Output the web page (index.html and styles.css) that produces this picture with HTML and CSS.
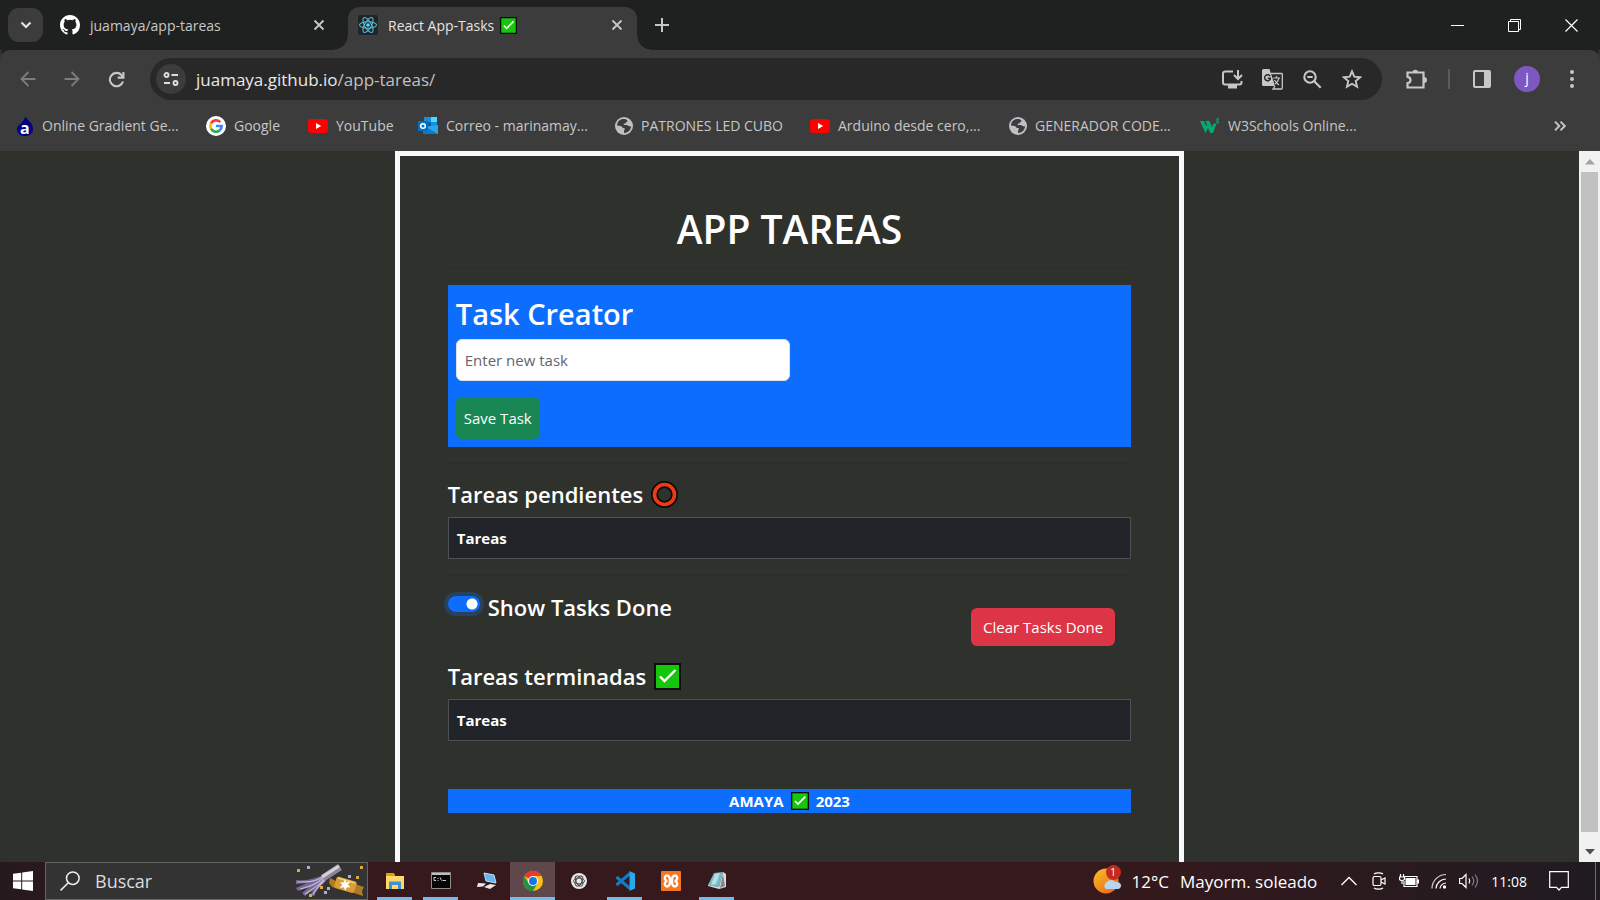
FILE: index.html
```html
<!DOCTYPE html>
<html lang="es">
<head>
<meta charset="utf-8">
<meta name="viewport" content="width=device-width, initial-scale=1">
<title>React App-Tasks</title>
<link rel="stylesheet" href="styles.css">
</head>
<body>
<svg class="defs" aria-hidden="true">
  <symbol id="check" viewBox="0 0 27 27"><path fill="#0b0f0a" d="M0 0h27v27H0z"/><path fill="#16c60c" d="M2 2h23v23H2z"/><path fill="none" stroke="#fff" stroke-width="2.400" d="M6 13.500l4.500 4.500L21.500 7"/></symbol>
  <symbol id="x" viewBox="0 0 12 12"><path fill="none" stroke="currentColor" stroke-width="1.800" d="M1.500 1.500l9 9m0-9l-9 9"/></symbol>
  <symbol id="yt" viewBox="0 0 20 20"><rect y="3" width="20" height="14" rx="3.500" fill="#f00"/><path fill="#fff" d="M8 7l5.200 3L8 13z"/></symbol>
  <symbol id="globe" viewBox="0 0 18 18"><circle cx="9" cy="9" r="9" fill="#bdc1c6"/><path fill="#3c3c3c" d="M8 2C4 2.500 2 5.500 2 8.500l3.500.500c1.500 0 1.500 2 3 2 1.500 0 2 1 .5 2.500V16c4-.2 7-3 7-7-1 1-2.500 0-3-.5-1-.5-2-.5-3.500-.5-1 0-1.500-1.500 0-1.500h1c.5-2 2-1 2-3C11 2 9.500 1.800 8 2z"/></symbol>
</svg>

<header class="tabs">
  <button class="tab-search" aria-label="Buscar pestañas"><svg width="12" height="8" viewBox="0 0 12 8"><path fill="none" stroke="#e3e3e3" stroke-width="2.200" d="M1.500 1.500L6 6l4.500-4.500"/></svg></button>
  <div class="tab">
    <svg width="20" height="20" viewBox="0 0 16 16"><path fill="#fff" d="M8 0C3.580 0 0 3.580 0 8c0 3.540 2.290 6.530 5.470 7.590.4.070.55-.17.55-.38 0-.19-.01-.82-.01-1.490-2.010.37-2.530-.49-2.690-.94-.09-.23-.48-.94-.82-1.130-.28-.15-.68-.52-.01-.53.63-.01 1.080.58 1.230.82.72 1.210 1.870.87 2.330.66.07-.52.28-.87.51-1.070-1.780-.2-3.640-.89-3.640-3.950 0-.87.31-1.590.82-2.150-.08-.2-.36-1.020.08-2.120 0 0 .67-.21 2.200.82a7.600 7.600 0 0 1 4 0c1.530-1.040 2.200-.82 2.200-.82.44 1.100.16 1.920.08 2.120.51.56.82 1.270.82 2.150 0 3.070-1.870 3.750-3.650 3.950.29.25.54.73.54 1.480 0 1.070-.01 1.930-.01 2.200 0 .21.15.46.55.38A8 8 0 0 0 16 8c0-4.420-3.580-8-8-8z"/></svg>
    <span class="tab-title">juamaya/app-tareas</span>
    <button class="icon-btn" aria-label="Cerrar"><svg width="12" height="12"><use href="#x"/></svg></button>
  </div>
  <div class="tab tab-active">
    <svg width="20" height="20" viewBox="0 0 20 20"><rect width="20" height="20" rx="2" fill="#222527"/><g fill="none" stroke="#55bcd6" stroke-width="1.100"><ellipse cx="10" cy="10" rx="8.500" ry="3.300"/><ellipse cx="10" cy="10" rx="8.500" ry="3.300" transform="rotate(60 10 10)"/><ellipse cx="10" cy="10" rx="8.500" ry="3.300" transform="rotate(120 10 10)"/></g><circle cx="10" cy="10" r="1.700" fill="#61dafb"/></svg>
    <span class="tab-title">React App-Tasks <svg class="tab-check" role="img" aria-label="hecho"><use href="#check"/></svg></span>
    <button class="icon-btn" aria-label="Cerrar"><svg width="12" height="12"><use href="#x"/></svg></button>
  </div>
  <button class="icon-btn new-tab" aria-label="Nueva pestaña"><svg width="14" height="14" viewBox="0 0 14 14"><path stroke="currentColor" stroke-width="2" d="M7 0v14M0 7h14"/></svg></button>
  <div class="win-buttons">
    <button aria-label="Minimizar"><svg width="13" height="13"><path stroke="#fff" d="M0 6.500h13"/></svg></button>
    <button aria-label="Restaurar"><svg width="13" height="13"><path fill="none" stroke="#fff" d="M.5 2.500h10v10H.5zM2.500 2.500v-2h10v10h-2"/></svg></button>
    <button aria-label="Cerrar ventana"><svg width="13" height="13"><path stroke="#fff" stroke-width="1.200" d="M.5.500l12 12m0-12l-12 12"/></svg></button>
  </div>
</header>

<nav class="toolbar">
  <div class="nav-buttons">
    <button class="icon-btn dim" aria-label="Atrás"><svg width="16" height="16" viewBox="0 0 16 16"><path fill="none" stroke="currentColor" stroke-width="1.800" d="M15.500 8H2m6.500-7L1.500 8l7 7"/></svg></button>
    <button class="icon-btn dim" aria-label="Adelante"><svg width="16" height="16" viewBox="0 0 16 16"><path fill="none" stroke="currentColor" stroke-width="1.800" d="M.5 8H14M7.500 1l7 7-7 7"/></svg></button>
    <button class="icon-btn" aria-label="Recargar"><svg width="17" height="17" viewBox="0 0 17 17"><path fill="none" stroke="currentColor" stroke-width="2.100" d="M15 10.500A6.700 6.700 0 1 1 13.500 4l1.500 1.800"/><path fill="none" stroke="currentColor" stroke-width="2.100" d="M15.400 1v5.600H9.700"/></svg></button>
  </div>
  <div class="omnibox">
    <button class="site-info" aria-label="Información del sitio"><svg width="16" height="14" viewBox="0 0 16 14"><g fill="none" stroke="#dedede" stroke-width="1.900"><circle cx="3.500" cy="3" r="2"/><path d="M8.500 3H15M1 11h6"/><circle cx="12.500" cy="11" r="2"/></g></svg></button>
    <div class="url">juamaya.github.io<span>/app-tareas/</span></div>
    <button class="icon-btn" aria-label="Instalar"><svg width="21" height="19" viewBox="0 0 21 19"><path fill="none" stroke="currentColor" stroke-width="2" d="M11 1.500H3.500C2 1.500 1 2 1 3.500v9c0 1 .8 2 2 2h14.500c1.200 0 2-1 2-2V11"/><path fill="currentColor" d="M6 15h9v3.500H6z"/><path fill="none" stroke="currentColor" stroke-width="2" d="M16 0v9m-4-4l4 4 4-4"/></svg></button>
    <button class="icon-btn" aria-label="Traducir"><svg width="21" height="21" viewBox="0 0 21 21"><path fill="currentColor" d="M1.500 0h6L13 17H1.500A1.500 1.500 0 0 1 0 15.500v-14A1.500 1.500 0 0 1 1.500 0z"/><path fill="none" stroke="currentColor" stroke-width="1.300" d="M9 4.500h10.500c.5 0 .8.300.8.800V19c0 .6-.3 1-.8 1H11l2-3"/><path fill="none" stroke="#282828" stroke-width="1.400" d="M8.200 7.200A3 3 0 1 0 8.300 10.200V9.300H5.700"/><path fill="none" stroke="currentColor" stroke-width="1.200" d="M11 9h7m-3.500-2v2m2.500 0c-.7 3-2.500 5-4 6m-.5-4c1 2 2.500 3.700 4.500 5"/></svg></button>
    <button class="icon-btn" aria-label="Zoom"><svg width="19" height="19" viewBox="0 0 19 19"><g fill="none" stroke="currentColor" stroke-width="2.100"><circle cx="7" cy="7" r="5.700"/><path d="M11.200 11.200l6.500 6.500M4.300 7h5.400"/></g></svg></button>
    <button class="icon-btn" aria-label="Favorito"><svg width="20" height="20" viewBox="0 0 20 20"><path fill="none" stroke="currentColor" stroke-width="1.900" d="M10 2.300l2.300 5.400 5.900.5-4.500 3.900 1.400 5.700-5.100-3-5.100 3 1.400-5.700-4.500-3.900 5.900-.5z"/></svg></button>
  </div>
  <div class="tools">
    <button class="icon-btn" aria-label="Extensiones"><svg width="21" height="21" viewBox="0 0 21 21"><path fill="none" stroke="currentColor" stroke-width="2.200" d="M2 3.500h15.500v15H1.500v-4.300c4-.5 4-5.900 0-6.400V3.500z"/><path fill="currentColor" d="M6.500 3.500a2.800 2.800 0 0 1 5.600 0zM18 8a3 3 0 0 1 0 6z"/></svg></button>
    <span class="divider"></span>
    <button class="icon-btn" aria-label="Panel lateral"><svg width="18" height="18" viewBox="0 0 18 18"><rect x="1" y="1" width="16" height="16" rx="1" fill="none" stroke="currentColor" stroke-width="2"/><path fill="currentColor" d="M11 1h6v16h-6z"/></svg></button>
    <button class="avatar" aria-label="Perfil">j</button>
    <button class="icon-btn" aria-label="Menú"><svg width="4" height="18"><g fill="currentColor"><circle cx="2" cy="2" r="2"/><circle cx="2" cy="9" r="2"/><circle cx="2" cy="16" r="2"/></g></svg></button>
  </div>
</nav>

<nav class="bookmarks">
  <div class="bookmark-list">
    <a href="#"><svg class="flame" width="18" height="20" viewBox="0 0 18 20"><path fill="#000080" d="M9.500 0C10 4 17 6 17 13c0 4-3 7-8 7s-8-3-8-7C1 9 8 7 9.500 0z"/><text x="4" y="18" class="fav-letter">a</text></svg>Online Gradient Ge...</a>
    <a href="#"><svg width="20" height="20" viewBox="0 0 20 20"><circle cx="10" cy="10" r="10" fill="#fff"/><g fill="none" stroke-width="2.700"><path stroke="#ea4335" d="M14.200 6.200A5.700 5.700 0 0 0 5 7.300"/><path stroke="#fbbc05" d="M5 7.300a5.700 5.700 0 0 0 0 5.400"/><path stroke="#34a853" d="M5 12.700a5.700 5.700 0 0 0 8.700 1.700"/><path stroke="#4285f4" d="M13.700 14.400A5.700 5.700 0 0 0 15.600 10H10"/></g></svg>Google</a>
    <a href="#"><svg width="20" height="20"><use href="#yt"/></svg>YouTube</a>
    <a href="#"><svg width="20" height="20" viewBox="0 0 20 20"><path fill="#1490df" d="M6 1h13v9H6z"/><path fill="#50d9ff" d="M13 1h6v5h-6z"/><path fill="#0a5ea8" d="M6 6h7v5H6z"/><path fill="#28a8ea" d="M5 11l15-2v9H5z"/><path fill="#0f78c8" d="M5 9l8 5 7 4H5z"/><rect y="5" width="10" height="10" fill="#0072c6"/><circle cx="5" cy="10" r="2.300" fill="none" stroke="#fff" stroke-width="1.500"/></svg>Correo - marinamay...</a>
    <a href="#"><svg width="18" height="18"><use href="#globe"/></svg>PATRONES LED CUBO</a>
    <a href="#"><svg width="20" height="20"><use href="#yt"/></svg>Arduino desde cero,...</a>
    <a href="#"><svg width="18" height="18"><use href="#globe"/></svg>GENERADOR CODE...</a>
    <a href="#"><svg width="20" height="16" viewBox="0 0 20 16"><path fill="#04aa6d" d="M0 3h4l2 5 1-1-1.500-4h4l2.500 6 1.500-3.500h3L13 15h-2.500l-2.500-5-2.500 5z"/><path fill="none" stroke="#04aa6d" stroke-width="1.100" d="M16 1h2.500L17 3c2.500 0 2 2.500-1 2"/></svg>W3Schools Online...</a>
  </div>
  <button class="icon-btn" aria-label="Más marcadores"><svg width="12" height="10" viewBox="0 0 12 10"><path fill="none" stroke="currentColor" stroke-width="1.900" d="M1 .7L5.300 5 1 9.300M6.500.7L10.800 5 6.500 9.300"/></svg></button>
</nav>

<div class="viewport">
  <main class="page">
    <div class="frame">
      <h1>APP TAREAS</h1>
      <hr>
      <form class="creator">
        <h2><label for="task">Task Creator</label></h2>
        <input id="task" class="task-input" type="text" placeholder="Enter new task">
        <button class="btn-save" type="button">Save Task</button>
      </form>
      <hr>
      <h4>Tareas pendientes <svg class="emoji" role="img" aria-label="círculo rojo" viewBox="0 0 27 27"><circle cx="13.500" cy="13.500" r="10" fill="none" stroke="#0b0b0a" stroke-width="7"/><circle cx="13.500" cy="13.500" r="10" fill="none" stroke="#f03a17" stroke-width="3.600"/></svg></h4>
      <table><thead><tr><th scope="col">Tareas</th></tr></thead></table>
      <hr>
      <div class="filter">
        <div class="switch"><input id="show" type="checkbox" role="switch" checked><label for="show">Show Tasks Done</label></div>
        <button class="btn-clear" type="button">Clear Tasks Done</button>
      </div>
      <h4>Tareas terminadas <svg class="emoji" role="img" aria-label="hecho"><use href="#check"/></svg></h4>
      <table><thead><tr><th scope="col">Tareas</th></tr></thead></table>
      <footer>AMAYA <svg class="emoji-small" role="img" aria-label="hecho"><use href="#check"/></svg> 2023</footer>
    </div>
  </main>
  <div class="scrollbar">
    <button aria-label="Subir"><svg width="10" height="6"><path fill="#a3a3a3" d="M0 5.500L5 0l5 5.500z"/></svg></button>
    <div class="thumb"></div>
    <button aria-label="Bajar"><svg width="10" height="6"><path fill="#505050" d="M0 0h10L5 5.500z"/></svg></button>
  </div>
</div>

<div class="taskbar">
  <button class="start" aria-label="Inicio"><svg width="20" height="20" viewBox="0 0 20 20"><path fill="#fff" d="M0 2.800L8.200 1.700v7.800H0zM9.200 1.500L20 0v9.500H9.200zM0 10.500h8.200v7.800L0 17.200zM9.200 10.500H20V20L9.200 18.500z"/></svg></button>
  <label class="search">
    <svg width="20" height="20" viewBox="0 0 20 20"><g fill="none" stroke="#f0f0f0" stroke-width="1.500"><circle cx="12.800" cy="7.200" r="6.300"/><path d="M8.300 11.700L.6 19.400"/></g></svg>
    <input type="text" placeholder="Buscar" aria-label="Buscar">
    <svg width="68" height="34" viewBox="0 0 68 34"><path fill="#75678f" d="M25 12l5 5c-5 5-9 8-12 15l-4-1 3-5-8 6-3-3 7-6-11 4-2-3 11-5-11 1v-4c10 1 17-1 25-4z"/><g fill="none" stroke="#c3b7dc" stroke-width="1.200"><path d="M26 13c-6 5-14 5-25 5M27 14c-6 6-12 8-23 11M28 15c-5 7-12 10-19 15M29 16c-5 5-10 9-12 15"/></g><path stroke="#8f8799" stroke-width="7" d="M27 14L44 3"/><path stroke="#d8d2dc" stroke-width="3" d="M26 13L43 2"/><path fill="#b27a22" d="M40 17l-6-3-1 5 3 4 4 1zM59 20l9 3-2 4 1 5-9-3z"/><rect x="39" y="15" width="21" height="12" rx="2" fill="#d99d35" transform="rotate(16 50 21)"/><path stroke="#f5cd72" stroke-width="1.800" d="M42 14l17 5"/><path fill="#fff" d="M49 15l1.200 3.500 3.800-1-2 3.300 2.500 2.700-3.500-.2-2 3.500-1-3.600-4.500.8 2.800-3-2.300-2.800 3.500.4z"/><path fill="#e0a83c" d="M1 5h3v3H1zM64 2h3v3h-3zM60 12h3v3h-3zM24 22h3v3h-3zM13 30h3v3h-3z"/><path fill="#b7a6cf" d="M11 2h3v3h-3zM52 11h3v3h-3zM31 23h3v3h-3zM28 27h3v3h-3z"/></svg>
  </label>
  <div class="apps">
    <button class="running" aria-label="Explorador"><svg width="20" height="20" viewBox="0 0 20 20"><path fill="#e0a10b" d="M1 2h8l1 2v3H1z"/><path fill="#ffd869" d="M1 5h18v13H1z"/><path fill="#3f91d4" d="M4 10.500h12V18h-3v-4H7v4H4z"/></svg></button>
    <button class="running" aria-label="Símbolo del sistema"><svg width="20" height="18" viewBox="0 0 20 18"><path fill="#060606" stroke="#8d8d8d" d="M.5.500h19v16H.5z"/><path fill="#bfbfbf" d="M1 1h18v2H1z"/><path fill="none" stroke="#ccc" d="M5 5.500H3v3h2M7 6v1m0 1v1M9 5.500l1.500 3M11.500 8.500H15"/></svg></button>
    <button aria-label="Escritorio remoto"><svg width="20" height="20" viewBox="0 0 20 20"><path fill="#5db9f2" stroke="#cfdce4" d="M7 2l10 2 2 8-10-2z"/><path fill="#e8ebed" d="M1 12l8 .5-3 3-6 .5zM7 16l6-3 6 1-6 4z"/></svg></button>
    <button class="running current" aria-label="Chrome"><svg width="20" height="20" viewBox="0 0 20 20"><circle cx="10" cy="10" r="10" fill="#fbc116"/><path fill="#e33b2e" d="M10 10L1.300 5A10 10 0 0 1 18.700 5H10z"/><path fill="#229342" d="M1.300 5A10 10 0 0 0 10 20l4.300-7.500L10 10 5.700 12.500z"/><circle cx="10" cy="10" r="5" fill="#fff"/><circle cx="10" cy="10" r="4" fill="#1a73e8"/></svg></button>
    <button aria-label="ChatGPT"><svg width="16" height="16" viewBox="0 0 16 16"><circle cx="8" cy="8" r="8" fill="#e8e8e8"/><g fill="none" stroke="#444" stroke-width=".9"><ellipse cx="8" cy="8" rx="5.500" ry="2.900"/><ellipse cx="8" cy="8" rx="5.500" ry="2.900" transform="rotate(60 8 8)"/><ellipse cx="8" cy="8" rx="5.500" ry="2.900" transform="rotate(120 8 8)"/></g></svg></button>
    <button class="running" aria-label="Visual Studio Code"><svg width="20" height="20" viewBox="0 0 20 20"><path fill="none" stroke="#0d7fc6" stroke-width="3" d="M15 2.500L1.500 14M1.500 6L15 17.500"/><path fill="#2aa5ee" d="M14.500 0L20 2.500v15L14.500 20z"/></svg></button>
    <button aria-label="XAMPP"><svg width="20" height="20" viewBox="0 0 20 20"><rect width="20" height="20" rx="1" fill="#f37623"/><path fill="none" stroke="#fff" stroke-width="2.400" stroke-linejoin="round" d="M8.500 10.500H11.500M8.500 9.500H11.500M9 10C9 6 8 4.500 6 4.500S3.500 7 4 8.200L5.500 10 4 11.800C3.500 13 4 15.500 6 15.500S9 14 9 10zM11 10c0-4 1-5.500 3-5.500S16.500 7 16 8.200L14.500 10l1.500 1.800c.5 1.200 0 3.700-2 3.700S11 14 11 10z"/></svg></button>
    <button class="running" aria-label="Bloc de notas"><svg width="20" height="20" viewBox="0 0 20 20"><path fill="#74b9c6" d="M7 2l9-1-4 15-11-2z"/><path fill="#b5dfe5" d="M8 3l5-1-4 11-5 1z"/><path fill="#ddd" d="M16 1l3 2v13l-7 2-11-3v-1l11 2z"/><path fill="#7b898c" d="M16 3l2 12-5 2z"/></svg></button>
  </div>
  <div class="tray">
    <a class="weather" href="#">
      <span class="sun"><svg width="28" height="26" viewBox="0 0 28 26"><defs><linearGradient id="sun" x2="0.700" y2="1"><stop stop-color="#f9bf2b"/><stop offset="1" stop-color="#ee6d17"/></linearGradient></defs><circle cx="13" cy="13" r="12.500" fill="url(#sun)"/><path fill="#b9d3f5" d="M13 21a4 4 0 0 1 1-7 5 5 0 0 1 8 0c8-1 7 7 3 7z"/></svg><span class="badge">1</span></span>
      <span>12°C</span><span>Mayorm. soleado</span>
    </a>
    <button class="overflow" aria-label="Iconos ocultos"><svg width="16" height="10"><path fill="none" stroke="#fff" stroke-width="1.300" d="M.5 9L8 1.500 15.500 9"/></svg></button>
    <button aria-label="Reunión"><svg width="16" height="18" viewBox="0 0 16 18"><g fill="none" stroke="#fff" stroke-width="1.200"><rect x="2" y="4.500" width="8" height="9" rx="1.500"/><path d="M10 8l4-2v6l-4-2M3 2c2-1.500 7-1.500 9 0M3 16c2 1.500 7 1.500 9 0"/></g></svg></button>
    <button aria-label="Batería"><svg width="20" height="14" viewBox="0 0 20 14"><path fill="none" stroke="#fff" stroke-width="1.200" d="M5 2.500h13v10H5V7M1.500 0v3m3-3v3M.5 3h5v2.500L3 7 .5 5.500zM3 7v3"/><path fill="#fff" d="M6.500 4h10v7h-10zM18 5.500h2v4h-2z"/></svg></button>
    <button aria-label="Wifi"><svg width="16" height="16" viewBox="0 0 16 16"><g fill="none" stroke="#fff" stroke-width="1.200"><path d="M9 15.500a6 6 0 0 1 6-5.500M5 15.500A10 10 0 0 1 15 6"/><path opacity=".8" d="M1 15.500A14 14 0 0 1 15 1.500"/></g><circle cx="13.500" cy="14" r="1.700" fill="#fff"/></svg></button>
    <button aria-label="Volumen"><svg width="20" height="16" viewBox="0 0 20 16"><path fill="none" stroke="#fff" stroke-width="1.200" d="M.6 5.500H3l4-4v13l-4-4H.6z"/><path fill="none" stroke="#fff" stroke-width="1.200" d="M10 5.500q1.500 2.500 0 5"/><path fill="none" stroke="#887f82" stroke-width="1.200" d="M13 3.500q3.500 4.500 0 9M16 1.500q5 6.500 0 13"/></svg></button>
    <time>11:08</time>
    <button class="notify" aria-label="Notificaciones"><svg width="20" height="20" viewBox="0 0 20 20"><path fill="none" stroke="#fff" stroke-width="1.200" d="M.7.700h18.600v15.600H12.500L10 19l-2.500-2.700H.7z"/></svg></button>
    <span class="show-desktop"></span>
  </div>
</div>
</body>
</html>
```
FILE: styles.css
```css
* { box-sizing: border-box; }

body {
  margin: 0;
  min-height: 100vh;
  display: flex;
  flex-direction: column;
  background: #2f312c;
  color: #fff;
  font-family: "Open Sans", "Noto Sans", sans-serif;
  font-size: 15px;
}

button {
  border: 0;
  padding: 0;
  background: none;
  color: inherit;
  font: inherit;
  display: flex;
  align-items: center;
  justify-content: center;
}

svg { flex: none; }
a { color: inherit; text-decoration: none; }
.defs { position: absolute; width: 0; height: 0; }
.icon-btn { color: #c7c7c7; width: 24px; height: 24px; flex: none; }
.dim { color: #7d7d7d; }

/* Tab strip */
.tabs {
  height: 50px;
  display: flex;
  align-items: center;
  background: #1f2120;
  padding-left: 8px;
}
.tab-search { width: 35px; height: 34px; border-radius: 11px; background: #3c3c3c; }
.tab {
  display: flex;
  align-items: center;
  gap: 10px;
  width: 289px;
  height: 42px;
  padding: 0 8px 0 10px;
  font-size: 14px;
  color: #c7c7c7;
}
.tab:not(.tab-active) { margin-left: 7px; }
.tab-title { flex: 1; white-space: nowrap; }
.tab-check { width: 17px; height: 17px; margin-left: 2px; vertical-align: -3px; }
.tab-active {
  margin-left: 9px;
  align-self: flex-end;
  height: 43px;
  padding-bottom: 7px;
  background: #3c3c3c;
  border-radius: 12px 12px 0 0;
  color: #e3e3e3;
  position: relative;
}
.tab-active::before, .tab-active::after {
  content: "";
  position: absolute;
  bottom: 0;
  width: 14px;
  height: 14px;
}
.tab-active::before { left: -14px; background: radial-gradient(circle at 0 0, transparent 13px, #3c3c3c 14px); }
.tab-active::after { right: -14px; background: radial-gradient(circle at 100% 0, transparent 13px, #3c3c3c 14px); }
.new-tab { margin-left: 13px; }
.win-buttons { margin-left: auto; display: flex; }
.win-buttons button { width: 57px; height: 48px; }

/* Toolbar */
.toolbar {
  height: 58px;
  display: flex;
  align-items: center;
  background: #3c3c3c;
  border-radius: 10px 10px 0 0;
  box-shadow: 0 -10px 0 -2px #1f2120;
  padding-right: 16px;
}
.nav-buttons { display: flex; gap: 20px; padding: 0 22px 0 16px; }
.omnibox {
  flex: 1;
  height: 42px;
  display: flex;
  align-items: center;
  gap: 16px;
  border-radius: 21px;
  background: #282828;
  padding: 0 18px 0 6px;
}
.site-info { width: 30px; height: 30px; border-radius: 15px; background: #3c3c3c; }
.url { flex: 1; margin-left: -6px; font-size: 17px; color: #e8e8e8; }
.url span { color: #c0c0c0; }
.tools { display: flex; align-items: center; padding-left: 22px; gap: 20px; }
.divider { width: 2px; height: 20px; background: #5c5c5c; }
.avatar { width: 26px; height: 26px; padding-bottom: 3px; border-radius: 50%; background: #7e57c2; font-size: 14px; }

/* Bookmarks */
.bookmarks {
  height: 43px;
  display: flex;
  align-items: center;
  justify-content: space-between;
  background: #3c3c3c;
  padding: 0 28px 8px 16px;
}
.bookmark-list {
  display: grid;
  grid-template-columns: 190px 102px 110px 197px 195px 199px 191px auto;
  font-size: 14px;
  color: #c7c7c7;
}
.bookmark-list a { display: flex; align-items: center; gap: 8px; white-space: nowrap; }
.flame { overflow: visible; }
.fav-letter { font: 700 16px "Open Sans", sans-serif; fill: #fff; }

/* Page */
.viewport { flex: 1; display: flex; }
.page { flex: 1; display: flex; justify-content: center; }
.frame { width: 50%; border: 5px solid #f8f9fa; border-bottom: 0; padding: 48px; }
h1, h2, h4 { margin: 0; font-weight: 600; }
h1 { font-size: 39px; line-height: 50px; margin-bottom: 14px; text-align: center; }
h1 + hr { margin-top: 0; }
h2 { font-size: 29px; line-height: 42px; margin-bottom: 4px; }
h4 { font-size: 22px; line-height: 29px; margin-bottom: 8px; display: flex; align-items: center; gap: 8px; }
hr { margin: 16px 0; border: 0; height: 1px; background: #2b2d29; }
.creator { background: #0d6efd; padding: 8px; }
.task-input {
  display: block;
  width: 50%;
  height: 42px;
  padding: 8px;
  border: 1px solid #dee2e6;
  border-radius: 6px;
  background: #fff;
  font: inherit;
  margin-bottom: 16px;
}
.task-input::placeholder { color: #5f666d; }
.btn-save { height: 42px; padding: 0 8px; border-radius: 6px; background: #198754; }
table { width: 100%; border-collapse: collapse; background: #212529; }
th { height: 41px; padding: 0 8px; border: 1px solid #4d5154; text-align: left; font-weight: 700; font-size: 15px; }
.emoji { width: 27px; height: 27px; }
.emoji-small { width: 18px; height: 18px; }
.filter { display: flex; justify-content: space-between; height: 70px; }
.switch { display: flex; align-items: flex-start; gap: 8px; font-size: 22px; font-weight: 600; line-height: 30px; }
.switch input {
  appearance: none;
  width: 32px;
  height: 16px;
  margin: 4px 0 0;
  border-radius: 8px;
  background: radial-gradient(circle at 24px 8px, #fff 5px, #0d6efd 6px);
  box-shadow: 0 0 0 4px #26425f;
}
.btn-clear { margin: 16px; height: 38px; padding: 0 12px; border-radius: 6px; background: #dc3545; }
footer {
  margin-top: 48px;
  height: 24px;
  display: flex;
  align-items: center;
  justify-content: center;
  gap: 7px;
  background: #0d6efd;
  font-weight: 700;
}

.scrollbar { width: 21px; display: flex; flex-direction: column; background: #f1f1f1; }
.scrollbar button { height: 21px; width: 21px; }
.thumb { flex: 1; margin: 0 2px 9px; background: #c1c1c1; }

/* Taskbar */
.taskbar {
  height: 38px;
  display: flex;
  align-items: center;
  background: linear-gradient(90deg, #26191e, #36191c 24%, #36191c 68%, #201b20);
}
.start { width: 45px; height: 38px; }
.search {
  width: 323px;
  height: 38px;
  display: flex;
  align-items: center;
  gap: 15px;
  padding: 0 3px 0 14px;
  border: 1px solid #656565;
  background: #333;
}
.search input { flex: 1; min-width: 0; border: 0; padding: 0; background: none; font: inherit; font-size: 18px; }
.search input::placeholder { color: #dcdcdc; }
.apps { display: flex; align-items: center; height: 38px; padding-left: 4px; gap: 1px; }
.apps button { width: 45px; height: 38px; border-bottom: 3px solid transparent; border-top: 3px solid transparent; }
.apps .running { background: linear-gradient(#76b9ed, #76b9ed) 50% 100% / 35px 3px no-repeat border-box; }
.apps .current { background: linear-gradient(#76b9ed, #76b9ed) 50% 100% / 45px 3px no-repeat border-box, #5f474b; background-clip: border-box; }
.tray { margin-left: auto; height: 38px; display: flex; align-items: center; gap: 12px; }
.overflow { margin-right: 2px; }
.weather { display: flex; align-items: center; gap: 11px; font-size: 17px; margin-right: 12px; white-space: nowrap; }
.sun { position: relative; display: flex; }
.badge {
  position: absolute;
  top: -3px;
  right: 0;
  width: 15px;
  height: 15px;
  border-radius: 50%;
  background: #c42b1c;
  font-size: 10px;
  line-height: 15px;
  text-align: center;
}
time { font-size: 14px; }
.notify { margin: 0 14px 0 10px; }
.show-desktop { width: 5px; height: 38px; border-left: 1px solid #6f6b6e; }
```
